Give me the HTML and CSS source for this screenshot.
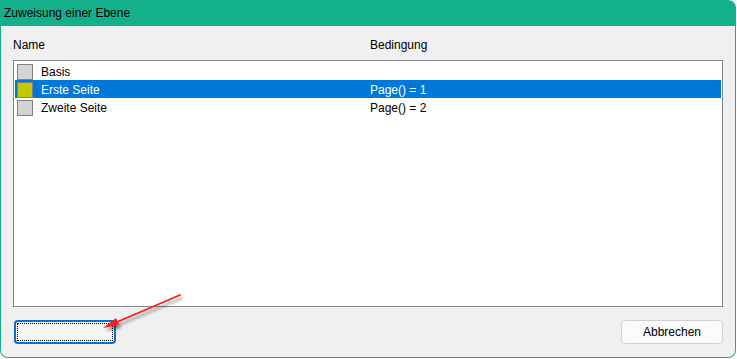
FILE: index.html
```html
<!DOCTYPE html>
<html>
<head>
<meta charset="utf-8">
<link rel="stylesheet" href="styles.css">
</head>
<body>
<div class="window">
  <div class="titlebar">Zuweisung einer Ebene</div>
  <div class="client">
    <div class="header">
      <span class="col-name">Name</span>
      <span class="col-cond">Bedingung</span>
    </div>
    <div class="list">
      <div class="row">
        <span class="col-name"><span class="swatch"></span>Basis</span>
        <span class="col-cond"></span>
      </div>
      <div class="row selected">
        <span class="col-name"><span class="swatch yellow"></span>Erste Seite</span>
        <span class="col-cond">Page() = 1</span>
      </div>
      <div class="row">
        <span class="col-name"><span class="swatch"></span>Zweite Seite</span>
        <span class="col-cond">Page() = 2</span>
      </div>
    </div>
    <div class="buttons">
      <button class="btn default"><span class="focus"></span></button>
      <button class="btn">Abbrechen</button>
    </div>
  </div>
  <svg class="arrow" width="120" height="60" viewBox="0 0 120 60">
    <defs>
      <filter id="sh" x="-20%" y="-40%" width="140%" height="180%">
        <feDropShadow dx="2" dy="3" stdDeviation="1.6" flood-color="#000" flood-opacity="0.45"/>
      </filter>
    </defs>
    <g filter="url(#sh)">
      <line x1="86" y1="6" x2="16" y2="36" stroke="#ff1a1a" stroke-width="1.8" stroke-linecap="round"/>
      <polygon points="9,39 22,29 25,36" fill="#ff1a1a"/>
    </g>
  </svg>
</div>
</body>
</html>
```
FILE: styles.css
```css
html, body {
  margin: 0;
  padding: 0;
  background: #ffffff;
}
body {
  width: 737px;
  height: 359px;
  font-family: "Liberation Sans", Arial, sans-serif;
  font-size: 12px;
  color: #000;
}
.window {
  position: relative;
  width: 736px;
  height: 358px;
  background: #14b08c;
  border-radius: 0 8px 8px 8px;
  display: flex;
  flex-direction: column;
  box-sizing: border-box;
  padding: 0 1px 1px 1px;
}
.titlebar {
  height: 26px;
  line-height: 25px;
  padding-top: 1px;
  box-sizing: border-box;
  padding-left: 3px;
  flex: none;
}
.client {
  flex: 1;
  background: #f0f0f0;
  border-radius: 0 0 7px 7px;
  padding: 0 12px 0 12px;
  display: flex;
  flex-direction: column;
}
.header {
  display: flex;
  height: 34px;
  align-items: center;
  padding-top: 4px;
  box-sizing: border-box;
}
.header .col-name {
  width: 357px;
}
.list {
  height: 247px;
  box-sizing: border-box;
  border: 1px solid #828790;
  background: #fff;
  padding: 1px;
}
.row {
  display: flex;
  height: 18px;
  box-sizing: border-box;
  padding-top: 1px;
  align-items: center;
}
.row .col-name {
  display: flex;
  align-items: center;
  width: 353px;
  padding-left: 2px;
}
.row.selected {
  background: #0078d7;
  color: #fff;
}
.swatch {
  width: 14px;
  height: 14px;
  border: 1px solid #7f7f7f;
  background: #d4d4d4;
  margin-right: 8px;
}
.swatch.yellow {
  background: #c3c800;
}
.buttons {
  display: flex;
  justify-content: space-between;
  margin-top: 13px;
  padding-left: 1px;
}
.btn {
  width: 102px;
  height: 24px;
  box-sizing: border-box;
  border: 1px solid #d0d0d0;
  border-radius: 4px;
  background: #fbfbfb;
  font-family: inherit;
  font-size: 12px;
  color: #000;
  padding: 0;
}
.btn.default {
  border: 2px solid #0a6fd0;
  background: #f8f8f8;
  padding: 1px;
  display: flex;
}
.focus {
  flex: 1;
  border: 1px dotted #000;
}
.arrow {
  position: absolute;
  left: 94px;
  top: 289px;
}
```
